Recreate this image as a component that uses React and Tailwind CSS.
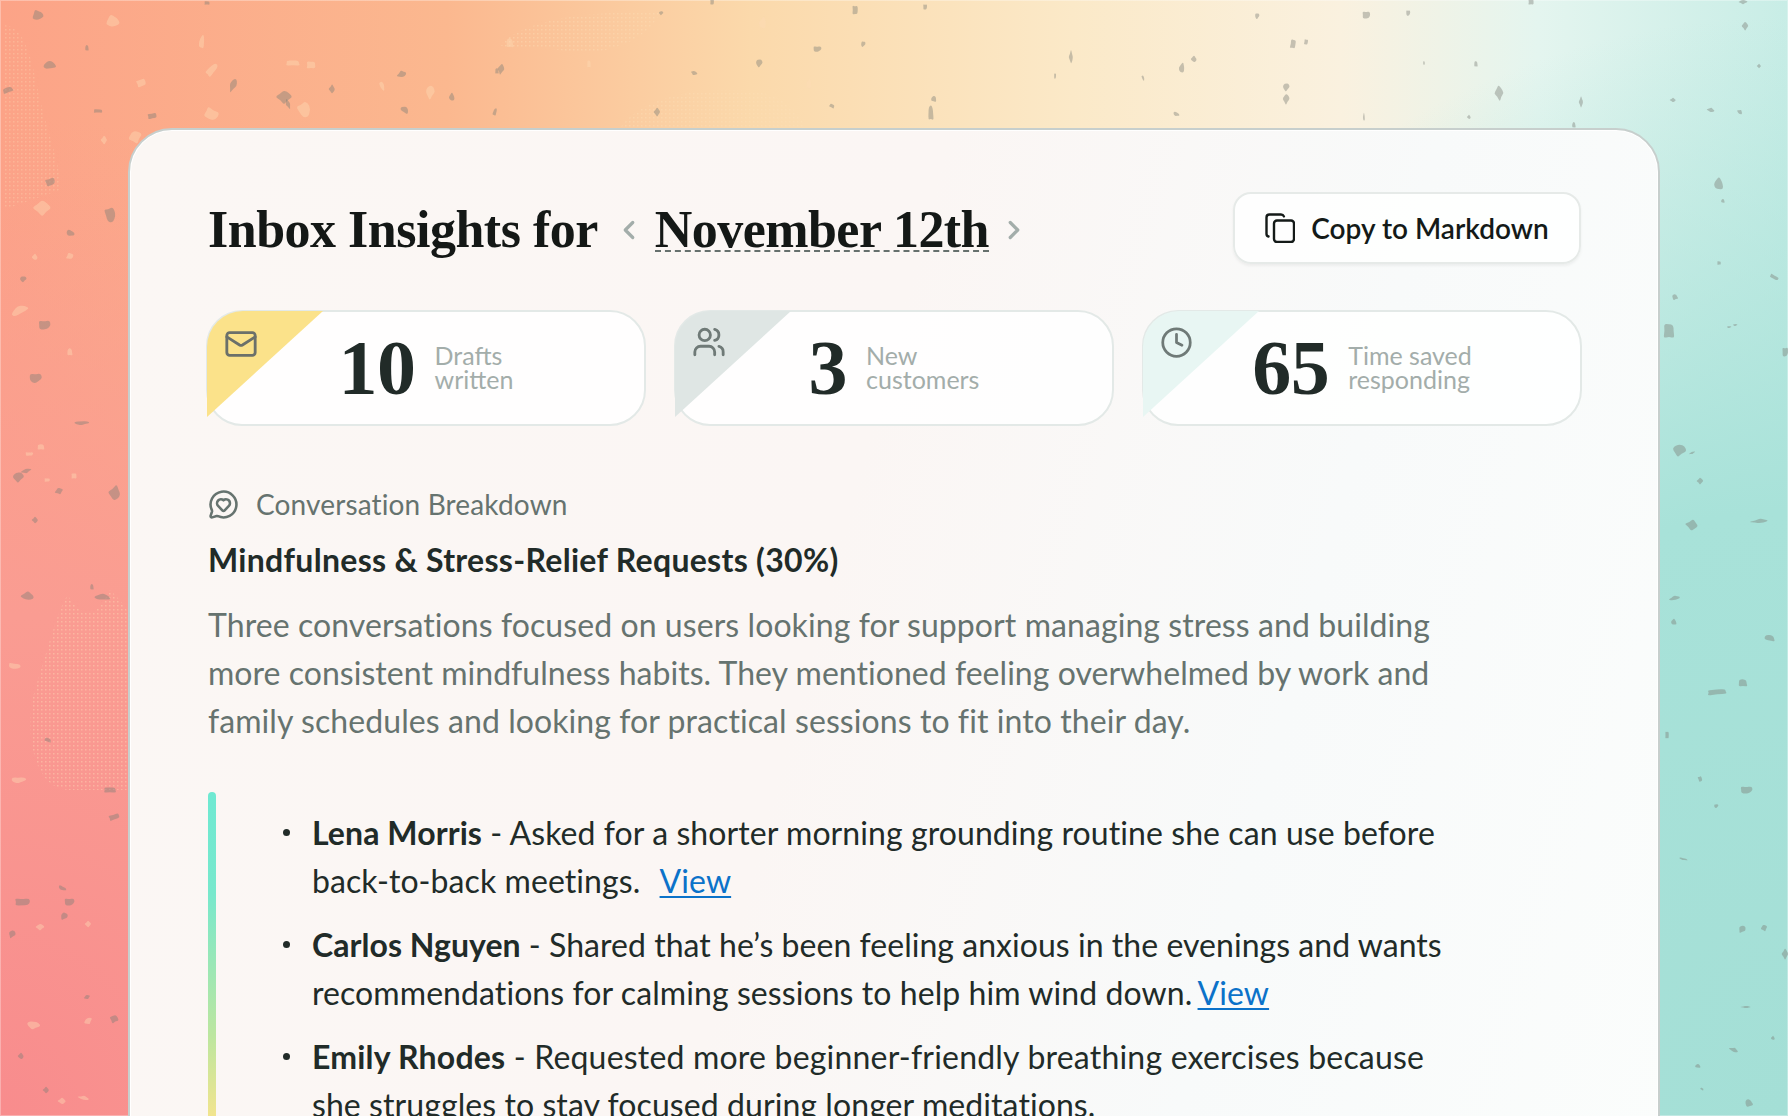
import { ChevronLeft, ChevronRight, Clock, Mail, MessageCircleHeart, Users } from 'lucide-react';

// [x, y, rx, ry, rotation]
const darkSpecks = [
  [44,325,6,5,0],[35,378,6,5,0],[81,423,7,2,0],[18,477,5,5,0],[26,471,5,2,-15],[59,491,4,3,-20],[35,520,3,3,0],[115,493,6,7,10],
  [28,596,7,4,0],[103,597,9,3,0],[92,587,2,3,0],[48,740,4,2,20],[110,790,7,3,0],[114,817,6,3,-20],[22,902,8,4,0],[69,902,5,4,0],
  [62,888,4,2,30],[64,916,3,4,30],[12,934,3,4,20],[114,1019,4,4,20],[87,997,3,2,-20],[46,1090,3,3,0],[21,1056,3,3,0],
  [38,15,6,5,-30],[50,65,7,4,-10],[87,48,2,3,0],[8,90,6,3,-20],[98,111,5,2,0],[152,116,5,3,-10],[50,182,5,4,-20],[110,215,5,8,-15],
  [70,233,4,3,30],[23,279,3,3,0],[233,85,3,7,20],[284,97,7,6,0],[288,104,2,5,-20],[332,89,3,4,0],[402,74,5,3,-20],[452,97,3,4,0],
  [405,110,5,3,30],[495,112,2,4,20],[497,71,2,3,0],[207,3,3,2,0],
  [855,10,3,5,0],[925,7,2,3,0],[817,49,4,3,0],[863,44,2,3,10],[759,63,3,4,0],[694,73,3,2,20],[501,69,3,5,10],[657,112,3,4,0],
  [1071,57,2,6,0],[1194,59,3,3,0],[1182,68,3,5,10],[934,99,3,3,10],[931,113,3,8,0],[832,106,3,2,30],[1293,44,3,5,10],[1306,42,2,3,10],
  [1366,15,4,4,0],[1408,13,2,3,0],[1257,16,2,3,0],[1286,87,3,4,0],[1286,99,3,5,0],[1499,93,4,7,-5],[1581,102,2,5,0],[1673,100,3,2,0],
  [1469,117,2,2,0],[1364,117,1,4,0],[1574,125,2,3,0],[1476,64,2,3,0],[1424,63,1,2,0],[1531,2,3,3,0],[712,2,2,3,0],[1055,76,1,3,0],
  [1143,78,1,3,-20],[1176,114,3,2,30],[661,13,2,2,0],
  [1743,2,4,2,0],[1745,26,3,4,0],[1759,66,2,2,0],[1711,110,4,2,10],[1740,112,3,2,30],[1719,184,5,6,0],[1723,201,2,2,0],[1675,297,3,3,-20],
  [1669,331,6,8,0],[1719,263,2,2,0],[1774,277,5,2,30],[1785,352,3,5,0],[1729,327,2,1,0],[1735,325,2,1,0],[1679,450,6,6,10],[1692,453,3,1,-20],
  [1700,481,3,3,0],[1692,525,6,5,10],[1760,521,9,2,-5],[1675,598,6,2,-15],[1674,622,3,3,0],[1770,638,6,3,10],[1743,683,5,4,0],[1717,692,11,3,-5],
  [1667,735,2,4,0],[1700,779,2,3,-20],[1746,790,6,4,0],[1716,806,2,2,0],[1683,859,4,1,15],[1742,929,3,4,30],[1764,928,3,3,-20],[1785,954,3,5,0],
  [1746,1007,5,1,0],[1734,1050,5,2,20],[1773,1038,2,2,0],[1698,1066,3,2,0],[1749,1103,4,4,-20],[1702,1089,2,1,30],
];

const lightSpecks = [
  [20,310,10,4,-30],[70,352,3,4,0],[41,447,4,3,0],[74,476,3,3,0],[47,480,3,2,0],[29,454,4,2,0],[14,666,6,3,10],[18,780,7,3,0],
  [33,1025,6,4,10],[88,1021,4,3,-30],[40,927,4,3,0],[88,924,3,3,0],[62,1101,4,3,0],[84,1098,6,2,10],
  [113,21,7,6,-20],[202,42,3,7,10],[212,70,4,8,45],[293,63,8,3,0],[311,65,5,4,0],[141,83,5,4,-20],[211,114,7,6,30],[304,110,6,8,-30],
  [382,86,2,5,-25],[430,92,4,7,0],[135,137,6,6,-20],[42,208,8,7,0],[104,140,3,4,0],[70,256,4,3,-30],[35,257,3,3,0],
  [763,23,4,6,10],[809,84,3,5,10],[510,43,4,5,0],[589,64,2,4,0],
];

// Rough closed blob so the specks don't read as clean ellipses
const blobPath = (x, y, rx, ry, rot, seed) => {
  const rad = (rot * Math.PI) / 180;
  const pts = Array.from({ length: 8 }, (_, i) => {
    const a = (i / 8) * Math.PI * 2;
    const k = 1 + 0.32 * Math.sin(seed * 12.9898 + i * 78.233);
    const px = Math.cos(a) * rx * k;
    const py = Math.sin(a) * ry * k;
    return [x + px * Math.cos(rad) - py * Math.sin(rad), y + px * Math.sin(rad) + py * Math.cos(rad)];
  });
  const mid = (p, q) => [(p[0] + q[0]) / 2, (p[1] + q[1]) / 2];
  const start = mid(pts[7], pts[0]);
  let d = `M${start[0].toFixed(1)} ${start[1].toFixed(1)}`;
  pts.forEach((p, i) => {
    const m = mid(p, pts[(i + 1) % 8]);
    d += `Q${p[0].toFixed(1)} ${p[1].toFixed(1)} ${m[0].toFixed(1)} ${m[1].toFixed(1)}`;
  });
  return d + 'Z';
};

const stats = [
  { value: '10', top: 'Drafts', bottom: 'written', Icon: Mail, corner: 'bg-[#fbe28a]', iconClass: 'mt-[16px] ml-[17px] w-[34px] h-[34px] text-[#6b706a]' },
  { value: '3', top: 'New', bottom: 'customers', Icon: Users, corner: 'bg-[#dfe6e4]', iconClass: 'mt-[14px] ml-[17px] w-[34px] h-[34px] text-[#6f7a77]' },
  { value: '65', top: 'Time saved', bottom: 'responding', Icon: Clock, corner: 'bg-[#e8f6f3]', iconClass: 'mt-[15px] ml-[17px] w-[33px] h-[33px] text-[#6f7a77]' },
];

const StatCard = ({ value, top, bottom, Icon, corner, iconClass }) => (
  <div className="relative h-[116px] rounded-[36px] border-2 border-[#e3e9e7] bg-white/90 flex items-center justify-center gap-[19px]">
    <div className={`absolute -left-[1px] -top-[1px] w-[116px] h-[106px] rounded-tl-[36px] [clip-path:polygon(0_0,100%_0,0_100%)] ${corner}`}>
      <Icon className={iconClass} strokeWidth={2} />
    </div>
    <span className="font-['Liberation_Serif'] font-bold text-[78px] leading-none text-[#212b28] tracking-[-0.5px]">{value}</span>
    <span className="mb-[2px] text-[25px] leading-[24px] text-[#a3adaa]">
      {top}
      <br />
      {bottom}
    </span>
  </div>
);

const ViewLink = ({ className = '' }) => (
  <a href="#" className={`text-[#0b72c9] underline underline-offset-[3px] decoration-2 ${className}`}>View</a>
);

const Bullet = () => (
  <span className="absolute -left-[29px] top-[20px] w-[7px] h-[7px] rounded-full bg-[#212b28]" />
);

const App = () => {
  return (
    <div className="relative h-[1116px] overflow-hidden font-['Lato',sans-serif] shadow-[inset_0_0_0_1px_rgba(255,255,255,0.3)] bg-[radial-gradient(ellipse_900px_1000px_at_0%_100%,#f88c8d_0%,#fa9c92_50%,#fca48a00_100%),radial-gradient(ellipse_900px_1100px_at_100%_100%,#a4dfd6_0%,#a8e2d9_55%,#c0eae200_100%),linear-gradient(90deg,#fca387_0%,#fbb88f_25%,#fbd9ab_42%,#fbe9c8_60%,#faf1df_75%,#e4f5ef_86%,#c8ede6_100%)]">
      {/* Terrazzo specks and stippled patches */}
      <svg className="absolute inset-0" width="1788" height="1116" viewBox="0 0 1788 1116">
        <defs>
          <pattern id="stipple" width="4" height="4" patternUnits="userSpaceOnUse">
            <rect x="1" y="1" width="1.5" height="1.5" fill="#fde0b8" />
          </pattern>
        </defs>
        <path d="M32 700C50 640 62 598 68 596C85 620 95 620 110 590C120 600 130 610 130 620V790H70C40 790 25 750 32 700Z" fill="url(#stipple)" opacity="0.4" />
        <path d="M3 25C25 25 32 60 40 100C50 140 62 170 60 190L3 210Z" fill="url(#stipple)" opacity="0.3" />
        <path d="M620 128C640 100 690 85 760 92C790 100 800 115 805 128Z" fill="url(#stipple)" opacity="0.4" />
        <path d="M500 45C530 15 600 12 660 12C650 40 600 60 560 50C530 45 510 50 500 45Z" fill="url(#stipple)" opacity="0.4" />
        {darkSpecks.map(([x, y, rx, ry, r], i) => (
          <path key={i} d={blobPath(x, y, rx, ry, r, i + 1)} fill="#7d7f78" opacity="0.42" />
        ))}
        {lightSpecks.map(([x, y, rx, ry, r], i) => (
          <path key={i} d={blobPath(x, y, rx, ry, r, i + 40)} fill="#fcdcb4" opacity="0.42" />
        ))}
      </svg>

      <div className="relative pt-[128px] px-[128px]">
        <div className="h-[1100px] rounded-t-[44px] border-2 border-[#c7cfcd] shadow-[inset_0_0_0_1px_#ffffff] pt-[62px] pl-[76px] pr-[76px] bg-[linear-gradient(105deg,#fbf7f4_0%,#fbf6f4_45%,#f8fafa_72%,#fbfdfc_100%)]">
          {/* Header */}
          <div className="flex items-center justify-between h-[72px] mr-[1px]">
            <div className="ml-[2px] flex items-center font-['Liberation_Serif'] font-bold text-[52px] leading-none text-[#141816] tracking-[-0.5px] translate-y-[2px]">
              <span>Inbox Insights for</span>
              <ChevronLeft className="w-[30px] h-[30px] ml-[16px] mr-[11px] text-[#a3adaa]" strokeWidth={2.6} />
              <span className="border-b-2 border-dashed border-[#66706d] leading-[41px] tracking-[-0.55px]">November 12th</span>
              <ChevronRight className="w-[30px] h-[30px] ml-[10px] text-[#a3adaa]" strokeWidth={2.6} />
            </div>
            <button className="w-[348px] h-[72px] rounded-[18px] border-2 border-[#e6eae8] bg-white/90 shadow-[0_2px_3px_rgba(0,0,0,0.05)] flex items-center justify-center gap-[16px] text-[28px] font-semibold text-[#141a18]">
              <svg width="30" height="30" viewBox="0 0 30 30" fill="none" stroke="currentColor" strokeWidth="2.4" strokeLinecap="round" strokeLinejoin="round">
                <rect x="9" y="7.5" width="20" height="21.5" rx="3" />
                <path d="M3.5 23.5C2.2 23.2 1.5 22.2 1.5 21V4.5C1.5 2.8 2.8 1.5 4.5 1.5H16C17.3 1.5 18.4 2.2 18.9 3.4" />
              </svg>
              Copy to Markdown
            </button>
          </div>

          {/* Stats */}
          <div className="grid grid-cols-3 gap-[28px] mt-[46px]">
            {stats.map((s) => (
              <StatCard key={s.value} {...s} />
            ))}
          </div>

          <div className="pl-[2px]">
            {/* Breakdown */}
            <div className="flex items-center gap-[17px] mt-[62px] h-[32px] text-[28px] tracking-[0.14px] text-[#66736f]">
              <MessageCircleHeart className="w-[31px] h-[31px]" strokeWidth={2} />
              Conversation Breakdown
            </div>
            <h2 className="mt-[20px] text-[32px] leading-[40px] font-bold tracking-[0.3px] text-[#212b28]">
              Mindfulness &amp; Stress-Relief Requests (30%)
            </h2>
            <p className="mt-[21px] text-[32px] leading-[48px] tracking-[0.08px] text-[#66736f]">
              Three conversations focused on users looking for support managing stress and building
              <br />
              <span className="tracking-[0.04px]">more consistent mindfulness habits. They mentioned feeling overwhelmed by work and</span>
              <br />
              family schedules and looking for practical sessions to fit into their day.
            </p>

            {/* Customer list */}
            <div className="relative mt-[47px] pt-[17px] pl-[104px]">
              <div className="absolute left-0 top-0 w-[8px] h-[340px] rounded-t-[4px] bg-[linear-gradient(180deg,#6fe9d2_0%,#78e8cc_30%,#bde69f_72%,#fce48b_100%)]" />
              <ul className="flex flex-col gap-[16px] text-[32px] leading-[48px] tracking-[0.08px] text-[#212b28]">
                <li className="relative">
                  <Bullet />
                  <strong>Lena Morris</strong> - Asked for a shorter morning grounding routine she can use before
                  <br />
                  back-to-back meetings. <ViewLink className="ml-[11px]" />
                </li>
                <li className="relative">
                  <Bullet />
                  <span className="tracking-[0.04px]"><strong>Carlos Nguyen</strong> - Shared that he’s been feeling anxious in the evenings and wants</span>
                  <br />
                  recommendations for calming sessions to help him wind down. <ViewLink className="-ml-[3px]" />
                </li>
                <li className="relative">
                  <Bullet />
                  <span className="tracking-[0.2px]"><strong>Emily Rhodes</strong> - Requested more beginner-friendly breathing exercises because</span>
                  <br />
                  she struggles to stay focused during longer meditations.
                </li>
              </ul>
            </div>
          </div>
        </div>
      </div>
    </div>
  );
};

export default App;
